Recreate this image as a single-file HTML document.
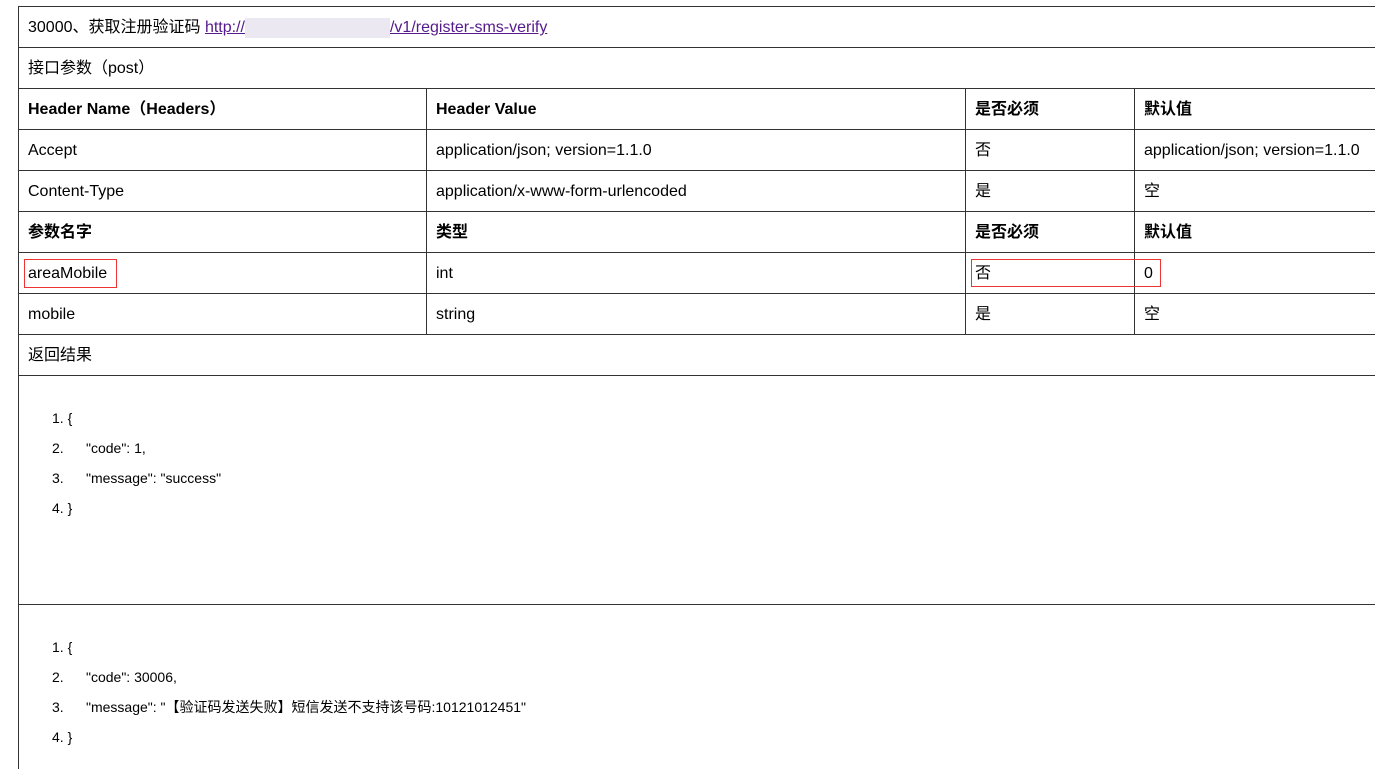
<!DOCTYPE html>
<html><head><meta charset="utf-8"><style>
body{margin:0;width:1375px;height:769px;background:#fff;overflow:hidden;font-family:"Liberation Sans","Noto Sans CJK SC",sans-serif;color:#000;position:relative}
.h{position:absolute;left:18px;width:1400px;height:1px;background:#333}
.v{position:absolute;width:1px;background:#333}
.t{position:absolute;font-size:16px;line-height:20px;white-space:nowrap}
.b{font-weight:bold}
.c{position:absolute;font-size:14px;line-height:18px;white-space:nowrap}
.c i{font-style:normal;display:inline-block;width:34px}
.r{position:absolute;border:1px solid #e33}
a{color:#551a8b;text-decoration:underline}
</style></head><body>
<div class="v" style="left:18px;top:6px;height:763px"></div>
<div class="h" style="top:6px"></div><div class="h" style="top:47px"></div><div class="h" style="top:88px"></div><div class="h" style="top:129px"></div><div class="h" style="top:170px"></div><div class="h" style="top:211px"></div><div class="h" style="top:252px"></div><div class="h" style="top:293px"></div><div class="h" style="top:334px"></div><div class="h" style="top:375px"></div><div class="h" style="top:604px"></div>
<div class="v" style="left:426px;top:88px;height:246px"></div>
<div class="v" style="left:965px;top:88px;height:246px"></div>
<div class="v" style="left:1134px;top:88px;height:246px"></div>
<div class="t" style="left:28px;top:18px">30000、获取注册验证码 <a>http://<span style="display:inline-block;width:145px;height:20px;background:#ece8f2;vertical-align:middle"></span>/v1/register-sms-verify</a></div>
<div class="t" style="left:28px;top:59px">接口参数（post）</div>
<div class="t b" style="left:28px;top:100px">Header Name（Headers）</div><div class="t b" style="left:436px;top:100px">Header Value</div><div class="t b" style="left:975px;top:100px">是否必须</div><div class="t b" style="left:1144px;top:100px">默认值</div>
<div class="t" style="left:28px;top:141px">Accept</div><div class="t" style="left:436px;top:141px">application/json; version=1.1.0</div><div class="t" style="left:975px;top:141px">否</div><div class="t" style="left:1144px;top:141px">application/json; version=1.1.0</div>
<div class="t" style="left:28px;top:182px">Content-Type</div><div class="t" style="left:436px;top:182px">application/x-www-form-urlencoded</div><div class="t" style="left:975px;top:182px">是</div><div class="t" style="left:1144px;top:182px">空</div>
<div class="t b" style="left:28px;top:223px">参数名字</div><div class="t b" style="left:436px;top:223px">类型</div><div class="t b" style="left:975px;top:223px">是否必须</div><div class="t b" style="left:1144px;top:223px">默认值</div>
<div class="t" style="left:28px;top:264px">areaMobile</div><div class="t" style="left:436px;top:264px">int</div><div class="t" style="left:975px;top:264px">否</div><div class="t" style="left:1144px;top:264px">0</div>
<div class="r" style="left:24px;top:259px;width:91px;height:27px"></div>
<div class="r" style="left:971px;top:259px;width:188px;height:26px"></div>
<div class="t" style="left:28px;top:305px">mobile</div><div class="t" style="left:436px;top:305px">string</div><div class="t" style="left:975px;top:305px">是</div><div class="t" style="left:1144px;top:305px">空</div>
<div class="t" style="left:28px;top:346px">返回结果</div>
<div class="c" style="left:52px;top:409px">1. {</div>
<div class="c" style="left:52px;top:439px"><i>2.</i>"code": 1,</div>
<div class="c" style="left:52px;top:469px"><i>3.</i>"message": "success"</div>
<div class="c" style="left:52px;top:499px">4. }</div>
<div class="c" style="left:52px;top:638px">1. {</div>
<div class="c" style="left:52px;top:668px"><i>2.</i>"code": 30006,</div>
<div class="c" style="left:52px;top:698px"><i>3.</i>"message": "【验证码发送失败】短信发送不支持该号码:10121012451"</div>
<div class="c" style="left:52px;top:728px">4. }</div>
</body></html>
